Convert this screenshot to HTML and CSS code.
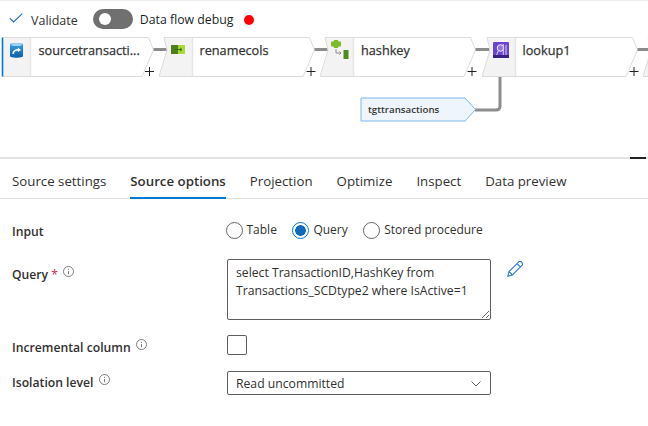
FILE: index.html
```html
<!DOCTYPE html>
<html lang="en">
<head>
<meta charset="utf-8">
<title>Data flow source options</title>
<link rel="stylesheet" href="styles.css">
</head>
<body>
<svg class="defs" width="0" height="0" aria-hidden="true">
  <symbol id="node-shape" viewBox="0 0 172 41">
    <polygon class="gray" points="5,1.5 8,13 0,39.5 34,39.5 34,1.5"/>
    <polygon class="white" points="33,0.5 150.5,0.5 155.5,13 144,39.5 33,39.5"/>
    <path class="edge" d="M5,0.5H150.5L155.5,13L144,39.5H0L8,13L5,0.5"/>
    <path class="div" d="M33.5,1V39"/>
    <path class="link" d="M155.5,12.5H169.5"/>
    <path class="plus" d="M147.5,34.5H156.5M152,30V39"/>
  </symbol>
  <symbol id="first-shape" viewBox="0 0 172 41">
    <polygon class="gray" points="5,1 33,1 33,39 5,39"/>
    <polygon class="white" points="33,0.5 150.5,0.5 155.5,13 144,39.5 33,39.5"/>
    <path class="edge" d="M5,0.5H150.5L155.5,13L144,39.5H5"/>
    <path class="div" d="M32.5,1V39"/>
    <path class="blue" d="M4.5,0.5V39.5"/>
    <path class="link" d="M155.5,12.5H169.5"/>
    <path class="plus" d="M147,34.5H156M151.5,30V39"/>
  </symbol>
</svg>

<header class="toolbar">
  <svg class="check" viewBox="0 0 14 10" width="14" height="10"><path d="M0.7,5.2L4.6,9L13.3,0.6"/></svg>
  <span class="validate">Validate</span>
  <span class="toggle"><span class="knob"></span></span>
  <span class="debug">Data flow debug</span>
  <span class="dot"></span>
</header>

<section class="canvas">
  <div class="node n1">
    <svg class="shape" width="172" height="41"><use href="#first-shape"/></svg>
    <svg class="icon i1" viewBox="0 0 13 16" width="13" height="16">
      <defs><linearGradient id="cyl" x1="0" x2="0" y1="0" y2="1"><stop offset="0" stop-color="#3f9fe6"/><stop offset="1" stop-color="#0b5fa8"/></linearGradient></defs>
      <path d="M0,2.5C0,0.5 13,0.5 13,2.5V14C13,16.3 0,16.3 0,14Z" fill="url(#cyl)"/>
      <ellipse cx="6.5" cy="2.5" rx="5.5" ry="1.6" fill="#9fd4f7"/>
      <path d="M3,12C3.3,9 5.5,7.8 8.5,7.8" fill="none" stroke="#fff" stroke-width="1.5"/>
      <path d="M7.8,5.6L11,7.9L7.8,10Z" fill="#fff"/>
    </svg>
    <span class="label">sourcetransacti...</span>
  </div>
  <div class="node n2">
    <svg class="shape" width="172" height="41"><use href="#node-shape"/></svg>
    <svg class="icon i2" viewBox="0 0 14 9" width="14" height="9">
      <rect width="7" height="9" fill="#4f7f1d"/>
      <rect x="7" width="7" height="9" fill="#a6d93c"/>
      <path d="M4,4.5H11M9,2.8L11,4.5L9,6.2" fill="none" stroke="#3f6a12" stroke-width="1"/>
    </svg>
    <span class="label">renamecols</span>
  </div>
  <div class="node n3">
    <svg class="shape" width="172" height="41"><use href="#node-shape"/></svg>
    <svg class="icon i3" viewBox="0 0 18 19" width="18" height="19">
      <path d="M3,0H7L7.5,1.5H10V6.5H7.5L7,8H3L2.5,6.5H0V1.5H2.5Z" fill="#7dbb2a"/>
      <path d="M5,9V13H10M8.5,11.5L10,13L8.5,14.5" fill="none" stroke="#8a8a8a" stroke-width="1"/>
      <rect x="12.5" y="10" width="5" height="9" fill="#4f8a1d"/>
    </svg>
    <span class="label">hashkey</span>
  </div>
  <div class="node n4">
    <svg class="shape" width="172" height="41"><use href="#node-shape"/></svg>
    <svg class="icon i4" viewBox="0 0 16 16" width="16" height="16">
      <rect width="16" height="16" rx="1" fill="#6a45d0"/>
      <rect y="13" width="16" height="3" fill="#38217f"/>
      <circle cx="7.5" cy="6" r="3.3" fill="#8f76e4" stroke="#f1edff" stroke-width="1"/>
      <path d="M5.2,8.6L3.6,13M10.3,2V13M13,3V13" stroke="#d9d0fa" stroke-width="1" fill="none"/>
    </svg>
    <span class="label">lookup1</span>
  </div>
  <div class="node n5">
    <svg class="shape" width="172" height="41"><use href="#node-shape"/></svg>
  </div>

  <svg class="wire" viewBox="0 0 30 36" width="30" height="36"><path d="M0,33H21Q25,33 25,29V0"/></svg>
  <div class="lookup-source">
    <svg class="tag" viewBox="0 0 117 25" width="117" height="25"><path d="M1,1H105L115.5,12.5L105,24H1Z"/></svg>
    <span class="tag-text">tgttransactions</span>
  </div>
</section>

<div class="splitter"><span class="handle"></span></div>

<nav class="tabs">
  <span class="tab">Source settings</span>
  <span class="tab active">Source options</span>
  <span class="tab">Projection</span>
  <span class="tab">Optimize</span>
  <span class="tab">Inspect</span>
  <span class="tab">Data preview</span>
</nav>

<main class="form">
  <div class="row row-input">
    <div class="field-label">Input</div>
    <div class="radios">
      <span class="radio"><span class="circle"></span>Table</span>
      <span class="radio on"><span class="circle"></span>Query</span>
      <span class="radio"><span class="circle"></span>Stored procedure</span>
    </div>
  </div>
  <div class="row row-query">
    <div class="field-label">Query <span class="req">*</span>
      <svg class="info" viewBox="0 0 11 11" width="11" height="11"><circle cx="5.5" cy="5.5" r="5"/><path d="M5.5,5V8.2M5.5,2.8V3.9"/></svg>
    </div>
    <textarea class="query" spellcheck="false">select TransactionID,HashKey from Transactions_SCDtype2 where IsActive=1</textarea>
    <svg class="pencil" viewBox="0 0 16 16" width="16" height="16"><path d="M0.8,15.2L2,10.6L11.3,1.3A2.1,2.1 0 0 1 14.7,4.7L5.4,14ZM2,10.6L5.4,14M10,2.6L13.4,6"/></svg>
  </div>
  <div class="row row-incr">
    <div class="field-label">Incremental column
      <svg class="info" viewBox="0 0 11 11" width="11" height="11"><circle cx="5.5" cy="5.5" r="5"/><path d="M5.5,5V8.2M5.5,2.8V3.9"/></svg>
    </div>
    <span class="checkbox"></span>
  </div>
  <div class="row row-iso">
    <div class="field-label">Isolation level
      <svg class="info" viewBox="0 0 11 11" width="11" height="11"><circle cx="5.5" cy="5.5" r="5"/><path d="M5.5,5V8.2M5.5,2.8V3.9"/></svg>
    </div>
    <div class="select"><span>Read uncommitted</span>
      <svg class="chev" viewBox="0 0 10 6" width="10" height="6"><path d="M0.5,0.5L5,5L9.5,0.5"/></svg>
    </div>
  </div>
</main>
</body>
</html>
```
FILE: styles.css
```css
* { box-sizing: border-box; }
html, body { margin: 0; padding: 0; }
body {
  width: 648px;
  height: 426px;
  overflow: hidden;
  background: #fff;
  color: #323130;
  font-family: "Open Sans", "Noto Sans", sans-serif;
  font-size: 12.5px;
}
.defs { position: absolute; }

.toolbar {
  height: 37px;
  display: flex;
  align-items: center;
  padding: 2px 0 0 9px;
  border-top: 1px solid #ececec;
}
.check { fill: none; stroke: #1f6fbf; stroke-width: 1.1; margin-top: -4px; }
.validate { margin-left: 8px; color: #323130; }
.toggle {
  width: 40px;
  height: 20px;
  margin-left: 15.5px;
  margin-top: -3px;
  border-radius: 10px;
  background: #707070;
  display: flex;
  align-items: center;
  padding-left: 6px;
}
.knob { width: 12px; height: 12px; border-radius: 50%; background: #fff; }
.debug { margin-left: 6.5px; margin-top: -2px; color: #201f1e; font-size: 12.3px; }
.dot { width: 10px; height: 10px; border-radius: 50%; background: #f00; margin-left: 10.5px; }

.canvas { position: relative; height: 120px; overflow: hidden; }
.node { position: absolute; top: -0.5px; width: 172px; height: 41px; }
.shape { position: absolute; left: 0; top: 0; overflow: visible; }
.n1 { left: -2.5px; }
.n2 { left: 158.5px; }
.n3 { left: 320px; }
.n4 { left: 481.5px; }
.n5 { left: 642.5px; width: 5.5px; overflow: hidden; }
.gray { fill: #f3f3f3; }
.white { fill: #fff; }
.edge { fill: none; stroke: #dcdcdc; stroke-width: 1; }
.div { fill: none; stroke: #e6e6e6; stroke-width: 1.5; }
.blue { fill: none; stroke: #0078d4; stroke-width: 1.6; }
.link { fill: none; stroke: #8c8c8c; stroke-width: 3; }
.plus { fill: none; stroke: #222; stroke-width: 1; }
.icon { position: absolute; }
.i1 { left: 12.5px; top: 5px; }
.i2 { left: 12.5px; top: 8px; }
.i3 { left: 11px; top: 3.5px; }
.i4 { left: 11.5px; top: 5px; }
.label {
  position: relative;
  display: block;
  padding: 4px 0 0 41px;
  font-size: 12.7px;
  color: #333;
  line-height: 18px;
  -webkit-text-stroke: 0.25px #333;
}
.wire { position: absolute; left: 475px; top: 39.5px; fill: none; stroke: #8c8c8c; stroke-width: 3; }
.lookup-source { position: absolute; left: 360px; top: 59.5px; width: 117px; height: 25px; }
.tag { position: absolute; left: 0; top: 0; }
.tag path { fill: #eef5fc; stroke: #79b8ec; stroke-width: 1; }
.tag-text {
  position: relative;
  display: block;
  padding-left: 8px;
  line-height: 25px;
  font-size: 9.7px;
  font-weight: 600;
  color: #333;
}

.splitter { height: 2px; background: #e3e3e3; display: flex; justify-content: flex-end; padding-right: 2px; }
.handle { width: 16px; background: #222; }

.tabs {
  height: 40px;
  display: flex;
  gap: 24px;
  padding-left: 12px;
  border-bottom: 1px solid #e3e3e3;
  color: #323130;
  font-size: 13.27px;
}
.tab { line-height: 45px; height: 40px; }
.tab.active { font-weight: 600; border-bottom: 2px solid #0078d4; }

.row { display: flex; padding-left: 12px; position: relative; }
.field-label { width: 215px; font-weight: 600; color: #323130; font-size: 12.2px; }
.row-input { margin-top: 22px; height: 20px; line-height: 22px; }
.radios { display: flex; gap: 15.5px; font-size: 12px; margin-left: -1.5px; line-height: 20px; }
.radio { display: flex; align-items: center; gap: 4px; color: #323130; height: 18px; }
.circle { width: 17px; height: 17px; border: 1px solid #666; border-radius: 50%; background: #fff; }
.on .circle { border-color: #0078d4; background: radial-gradient(circle, #0f6cbd 0 5px, #fff 5.6px); }

.row-query { margin-top: 18px; }
.row-query .field-label { padding-top: 6px; line-height: 20px; }
.req { color: #c4314b; font-weight: 400; }
.info { fill: none; stroke: #605e5c; stroke-width: 0.8; vertical-align: 2px; margin-left: 2px; }
.query {
  display: block;
  width: 264px;
  height: 61px;
  padding: 4px 8px;
  margin: 0;
  border: 1px solid #605e5c;
  border-radius: 2px;
  font: inherit;
  font-size: 12.2px;
  line-height: 18px;
  color: #323130;
  outline: none;
}
.pencil { margin: 2px 0 0 16px; fill: none; stroke: #2b7cd3; stroke-width: 1.1; }

.row-incr { margin-top: 15px; height: 20px; line-height: 26px; }
.checkbox { width: 20px; height: 20px; border: 1px solid #605e5c; border-radius: 2px; }

.row-iso { margin-top: 16px; height: 24px; line-height: 24px; }
.select {
  width: 264px;
  height: 24px;
  border: 1px solid #605e5c;
  border-radius: 2px;
  padding: 0 0 0 8px;
  display: flex;
  justify-content: space-between;
  align-items: center;
  color: #323130;
  font-size: 12.2px;
}
.select span { padding-top: 2px; }
.chev { fill: none; stroke: #605e5c; stroke-width: 1; margin: 2px 9px 0 0; }
```
